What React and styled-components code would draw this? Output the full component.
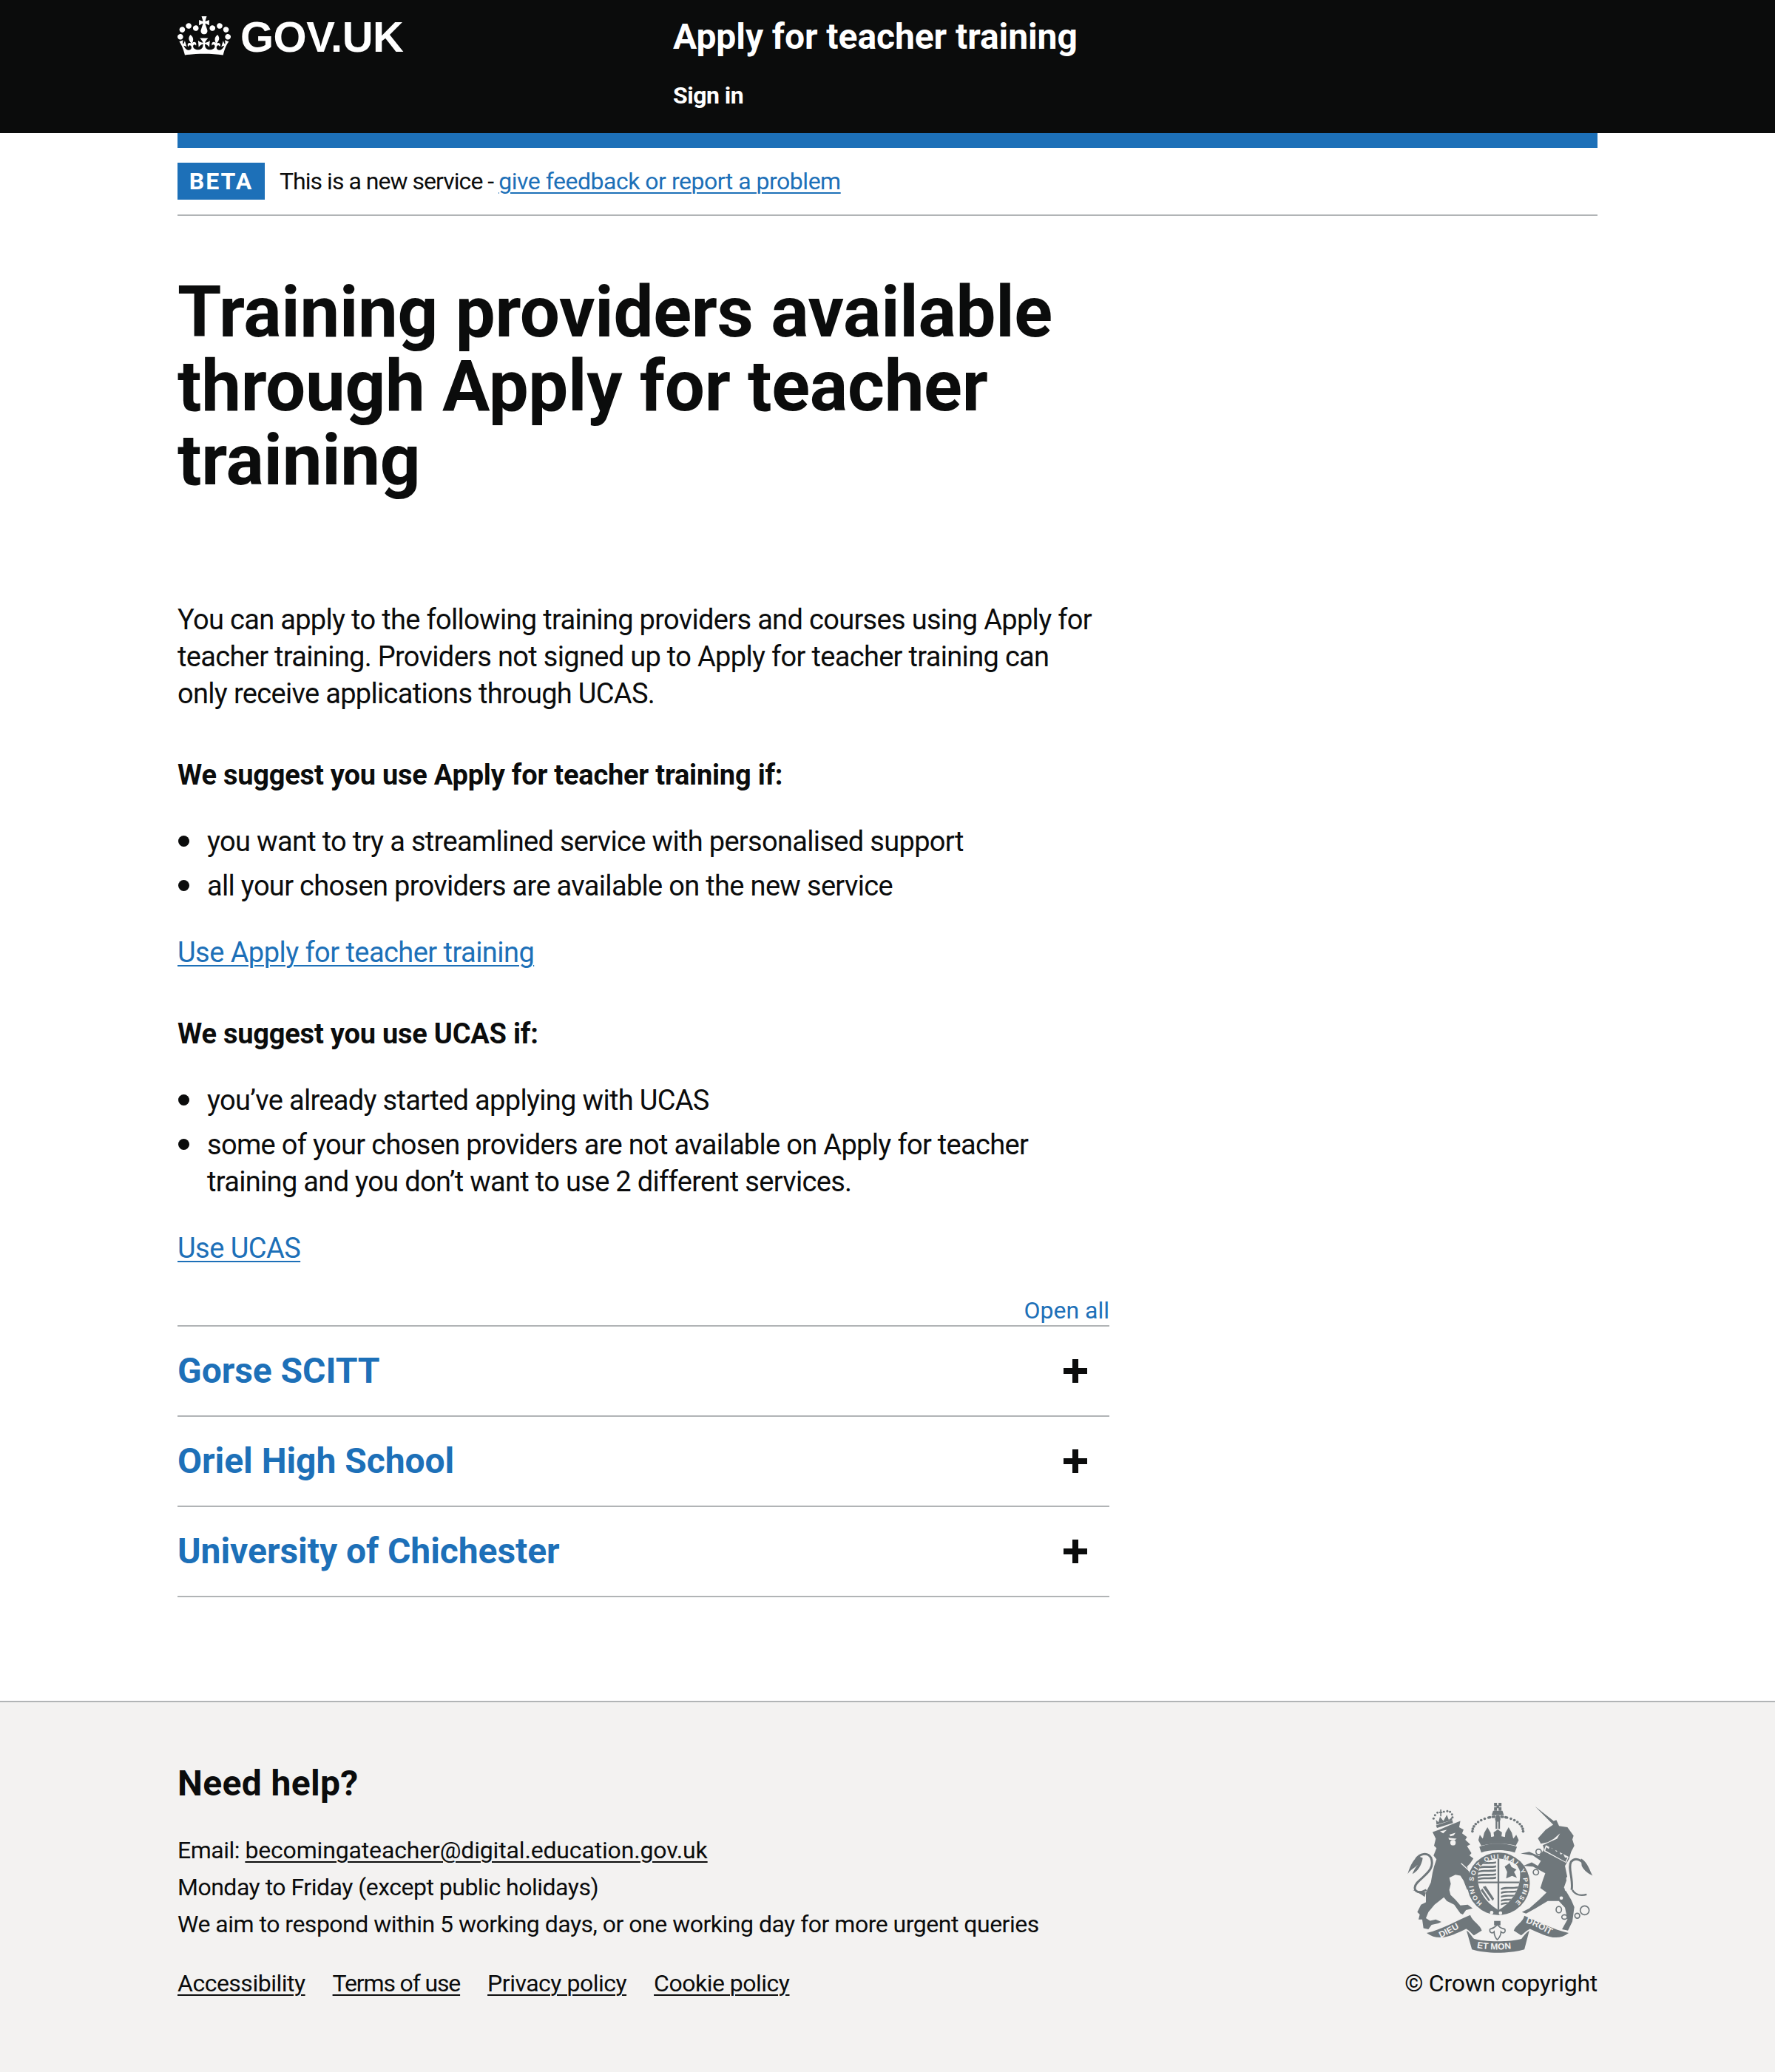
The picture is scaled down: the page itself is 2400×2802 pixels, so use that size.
import React from "react";
import styled, { createGlobalStyle } from "styled-components";

const BASE = `Roboto, "Noto Sans", Arial, sans-serif`;
const BLACK = "#0b0c0c";
const BLUE = "#1d70b8";
const GREY = "#b1b4b6";
const CREST = "#6f777b";
const FOOT = "#f3f2f1";

const Global = createGlobalStyle`
  html, body { margin: 0; padding: 0; background: #fff; }
  body { font-family: ${BASE}; color: ${BLACK}; }
  * { box-sizing: border-box; }
`;

const Wrap = styled.div`
  width: 1920px;
  margin: 0 auto;
`;
const Header = styled.header`
  background: ${BLACK};
  height: 180px;
`;
const HeaderInner = styled(Wrap)`
  display: flex;
  padding-top: 20px;
`;
const LogoBox = styled.a`
  width: 670px;
  display: flex;
  align-items: flex-start;
  gap: 13px;
  color: #fff;
`;
const Crown = styled.svg`
  width: 72px;
  height: 53px;
  margin-top: 2px;
  fill: currentColor;
`;
const LogoText = styled.span`
  font: 700 58px/58px "Liberation Sans", Arial, sans-serif;
  letter-spacing: -0.5px;
  margin-top: 1px;
`;
const HeaderContent = styled.div`
  display: flex;
  flex-direction: column;
  gap: 29px;
`;
const ServiceName = styled.a`
  color: #fff;
  font-size: 48px;
  font-weight: 700;
  line-height: 60px;
  letter-spacing: -0.07px;
`;
const HeaderNav = styled.a`
  color: #fff;
  font-size: 32px;
  font-weight: 700;
  line-height: 40px;
  letter-spacing: -0.5px;
`;
const BlueBar = styled(Wrap)`
  height: 20px;
  background: ${BLUE};
`;
const Phase = styled(Wrap)`
  display: flex;
  align-items: center;
  gap: 20px;
  padding: 20px 0;
  height: 92px;
  border-bottom: 2px solid ${GREY};
`;
const Tag = styled.strong`
  background: ${BLUE};
  color: #fff;
  width: 118px;
  height: 50px;
  display: flex;
  align-items: center;
  justify-content: center;
  font-size: 32px;
  font-weight: 700;
  letter-spacing: 2px;
`;
const PhaseText = styled.span`
  font-size: 32px;
  line-height: 40px;
  letter-spacing: -0.97px;
`;
const Link = styled.a`
  color: ${BLUE};
  text-decoration: underline;
  text-decoration-thickness: 2px;
  text-underline-offset: 4px;
`;
const PhaseLink = styled(Link)`
  letter-spacing: -0.49px;
`;
const Main = styled(Wrap)`
  padding-top: 80px;
`;
const H1 = styled.h1`
  margin: 0 0 141px;
  font-size: 96px;
  line-height: 100px;
  font-weight: 700;
  letter-spacing: -0.3px;
  max-width: 1260px;
`;
const Column = styled.div`
  width: 1260px;
`;
const P = styled.p`
  margin: 0;
  max-width: 1240px;
  font-size: 38px;
  line-height: 50px;
  letter-spacing: -0.68px;
`;
const H2 = styled.h2`
  margin: 60px 0 40px;
  font-size: 38px;
  line-height: 50px;
  font-weight: 700;
  letter-spacing: -0.22px;
`;
const List = styled.ul`
  margin: 0;
  padding: 0 0 0 40px;
  list-style: none;
`;
const Item = styled.li`
  position: relative;
  font-size: 38px;
  line-height: 50px;
  letter-spacing: -0.68px;
  margin-bottom: 10px;
  &:last-child { margin-bottom: 0; }
  &::before {
    content: "";
    position: absolute;
    left: -39px;
    top: 17px;
    width: 15px;
    height: 15px;
    border-radius: 50%;
    background: ${BLACK};
  }
`;
const BigLink = styled(Link)`
  display: block;
  margin-top: 40px;
  font-size: 38px;
  line-height: 50px;
  letter-spacing: -0.55px;
`;
const Controls = styled.div`
  margin-top: 39px;
  text-align: right;
  font-size: 32px;
  line-height: 40px;
`;
const OpenAll = styled.span`
  color: ${BLUE};
`;
const Accordion = styled.div`
  border-bottom: 2px solid ${GREY};
`;
const Section = styled.div`
  display: flex;
  justify-content: space-between;
  align-items: center;
  height: 122px;
  padding-right: 30px;
  border-top: 2px solid ${GREY};
`;
const SectionTitle = styled.span`
  color: ${BLUE};
  font-size: 48px;
  font-weight: 700;
  line-height: 60px;
  letter-spacing: -0.05px;
`;
const Plus = styled.svg`
  width: 32px;
  height: 32px;
  fill: ${BLACK};
`;
const Footer = styled.footer`
  margin-top: 140px;
  background: ${FOOT};
  border-top: 2px solid ${GREY};
  padding: 80px 0 100px;
  height: 502px;
`;
const FooterInner = styled(Wrap)`
  display: flex;
  justify-content: space-between;
  align-items: flex-end;
`;
const FooterLeft = styled.div`
  display: flex;
  flex-direction: column;
`;
const Need = styled.h2`
  margin: 0 0 35px;
  font-size: 48px;
  line-height: 60px;
  font-weight: 700;
  letter-spacing: 0.35px;
`;
const FooterLine = styled.div`
  font-size: 32px;
  line-height: 50px;
  letter-spacing: -0.5px;
`;
const FootLink = styled.a`
  color: ${BLACK};
  text-decoration: underline;
  text-decoration-thickness: 2px;
  text-underline-offset: 4px;
  letter-spacing: ${p => p.$spacing || "-0.5px"};
`;
const Links = styled.div`
  display: flex;
  gap: 37px;
  margin-top: 35px;
  font-size: 32px;
  line-height: 40px;
`;
const FooterRight = styled.div`
  display: flex;
  flex-direction: column;
  align-items: center;
  gap: 19px;
`;
const Crest = styled.svg`
  width: 253px;
  height: 207px;
`;
const Copyright = styled.div`
  font-size: 32px;
  line-height: 40px;
  letter-spacing: -0.25px;
`;
const CrestText = styled.text`
  font-family: "Liberation Sans", Arial, sans-serif;
  font-weight: 700;
  fill: ${FOOT};
`;

const CROWN = "M25 30.2c3.5 1.5 7.7-.2 9.1-3.7 1.5-3.6-.2-7.8-3.9-9.2-3.6-1.4-7.6.3-9.1 3.9-1.4 3.5.3 7.5 3.9 9zM9 39.5c3.6 1.5 7.8-.2 9.2-3.7 1.5-3.6-.2-7.8-3.9-9.1-3.6-1.5-7.6.2-9.1 3.8-1.4 3.5.3 7.5 3.8 9zM4.4 57.2c3.5 1.5 7.7-.2 9.1-3.8 1.5-3.6-.2-7.7-3.9-9.1-3.5-1.5-7.6.3-9.1 3.8-1.4 3.5.3 7.6 3.9 9.1zm38.3-21.4c3.5 1.5 7.7-.2 9.1-3.8 1.5-3.6-.2-7.7-3.9-9.1-3.6-1.5-7.6.3-9.1 3.8-1.3 3.6.4 7.7 3.9 9.1zm64.4-5.6c-3.6 1.5-7.8-.2-9.1-3.7-1.5-3.6.2-7.8 3.8-9.2 3.6-1.4 7.7.3 9.2 3.9 1.3 3.5-.4 7.5-3.9 9zm15.9 9.3c-3.6 1.5-7.7-.2-9.1-3.7-1.5-3.6.2-7.8 3.7-9.1 3.6-1.5 7.7.2 9.2 3.8 1.5 3.5-.3 7.5-3.8 9zm4.7 17.7c-3.6 1.5-7.8-.2-9.2-3.8-1.5-3.6.2-7.7 3.9-9.1 3.6-1.5 7.7.3 9.2 3.8 1.3 3.5-.4 7.6-3.9 9.1zM89.3 35.8c-3.6 1.5-7.8-.2-9.2-3.8-1.4-3.6.2-7.7 3.9-9.1 3.6-1.5 7.7.3 9.2 3.8 1.4 3.6-.3 7.7-3.9 9.1zM69.7 17.7l8.9 4.7V9.3l-8.9 2.8c-.2-.3-.5-.6-.9-.9L72.4 0H59.6l3.5 11.2c-.3.3-.6.5-.9.9l-8.8-2.8v13.1l8.8-4.7c.3.3.6.7.9.9l-5 15.4v.1c-.2.8-.4 1.6-.4 2.4 0 4.1 3.1 7.5 7 8.1h.2c.3 0 .7.1 1 .1.4 0 .7 0 1-.1h.2c4-.6 7.1-4.1 7.1-8.1 0-.8-.1-1.7-.4-2.4V34l-5.1-15.4c.4-.2.7-.6 1-.9zM66 92.8c16.9 0 32.8 1.1 47.1 3.2 4-16.9 8.9-26.7 14-33.5l-9.6-3.4c1 4.9 1.1 7.2 0 10.2-1.5-1.4-3-4.3-4.2-8.7L108.6 76c2.8-2 5-3.2 7.5-3.3-4.4 9.4-10 11.9-13.6 11.2-4.3-.8-6.3-4.6-5.6-7.9 1-4.7 5.7-5.9 8-.5 4.3-8.7-3-11.4-7.6-8.8 7.1-7.2 7.9-13.5 2.1-21.1-8 6.1-8.1 12.3-4.5 20.8-4.7-5.4-12.1-2.5-9.5 6.2 3.4-5.2 7.9-2 7.2 3.1-.6 4.3-6.4 7.8-13.5 7.2-10.3-.9-10.9-8-11.2-13.8 2.5-.5 7.1 1.8 11 7.3L80.2 60c-4.1 4.4-8 5.3-12.3 5.4 1.4-4.4 8-11.6 8-11.6H55.5s6.4 7.2 7.9 11.6c-4.2-.1-8-1-12.3-5.4l1.4 16.4c3.9-5.5 8.5-7.7 10.9-7.3-.3 5.8-.9 12.8-11.1 13.8-7.2.6-12.9-2.9-13.5-7.2-.7-5 3.8-8.3 7.1-3.1 2.7-8.7-4.6-11.6-9.4-6.2 3.7-8.5 3.6-14.7-4.6-20.8-5.8 7.6-5 13.9 2.2 21.1-4.7-2.6-11.9.1-7.7 8.8 2.3-5.5 7.1-4.2 8.1.5.7 3.3-1.3 7.1-5.7 7.9-3.5.7-9-1.8-13.5-11.2 2.5.1 4.7 1.3 7.5 3.3l-4.7-15.4c-1.2 4.4-2.7 7.2-4.3 8.7-1.1-3-.9-5.3 0-10.2l-9.5 3.4c5 6.9 9.9 16.7 14 33.5 14.8-2.1 30.8-3.2 47.7-3.2z";

const arc = (cx, cy, rx, ry, a0, a1, n) =>
  Array.from({ length: n }, (_, i) => {
    const a = ((a0 + ((a1 - a0) * i) / (n - 1)) * Math.PI) / 180;
    return [cx + rx * Math.cos(a), cy + ry * Math.sin(a)];
  });

const SHIELD = "M418 395 C423 365 455 345 500 342 C545 345 582 365 587 395 C592 450 570 510 500 552 C430 510 408 450 418 395 Z";

const Arms = () => (
  <Crest viewBox="130 110 760 622" aria-label="Royal coat of arms">
    <defs>
      <clipPath id="shieldClip"><path d={SHIELD} /></clipPath>
      <path id="garter" d="M434.4 523.1 A102 102 0 1 1 565.6 523.1" />
      <path id="ribL" d="M265 665 C300 650 335 625 372 610" />
      <path id="ribR" d="M610 603 C650 615 695 645 742 668" />
      <path id="ribC" d="M412 705 C460 715 530 715 585 703" />
    </defs>
    <g fill={CREST}>
      {/* lion */}
      <path d="M232 235 L262 224 L300 208 L345 190 L340 215 L358 225 L352 240 L372 255 L365 266 L385 285 L372 292 L390 320 L382 330 L398 342 L385 362 L372 375 L385 410 L405 440 L395 472 L372 468 L358 432 L345 412 L325 408 L300 420 L306 445 L300 470 L305 490 L325 510 L345 533 L375 530 L395 545 L368 552 L355 570 L345 565 L320 530 L290 515 L278 500 L240 530 L215 560 L205 585 L222 595 L245 590 L268 600 L255 606 L228 612 L215 630 L195 625 L190 590 L175 590 L180 570 L170 560 L185 530 L205 520 L205 480 L225 440 L232 400 L238 375 L248 345 L236 330 L248 300 L238 290 L245 262 Z" />
      <path d="M262 232 L290 226 L275 240 Z" fill={FOOT} />
      <path d="M300 245 L325 238 L318 248 L305 252 Z" fill={FOOT} />
      <circle cx="315" cy="278" r="11" fill={FOOT} />
      <path d="M296 258 L330 262 L322 268 L300 266 Z" fill={FOOT} />
      <path d="M348 362 L392 402" stroke={FOOT} strokeWidth="4" fill="none" />
      <path d="M207 470 C170 490 145 470 170 440 C205 405 242 385 226 340 C212 315 180 322 165 345" fill="none" stroke={CREST} strokeWidth="9" />
      <path d="M172 332 C150 350 138 380 131 405 C145 385 158 382 172 368 C160 380 155 395 150 405 C172 395 188 370 192 340 Z" />
      <path d="M150 470 C170 478 185 488 200 498 L205 480 Z" />
      {/* lion crown */}
      <path d="M246 208 L312 186 L315 198 L250 218 Z" />
      <path d="M248 205 L246 185 L256 195 L262 172 L276 190 L290 165 L298 185 L310 175 L312 186 Z" />
      {[[236,180],[242,166],[252,156],[278,152],[292,150],[303,153],[311,163],[313,175]].map(([x,y],i)=><circle key={i} cx={x} cy={y} r="4.5" />)}
      <path d="M259 152 h4 v-9 h5 v9 h4 v5 h-4 v14 h-5 v-14 h-4 z" />
      {/* central crown */}
      <path d="M418 268 L430 290 C460 280 535 280 570 290 L582 268 C540 250 455 250 418 268 Z" />
      <path d="M418 268 L424 246 L436 262 L442 238 L455 215 L468 238 L470 255 L482 252 L480 236 L497 224 L514 236 L512 252 L526 255 L528 238 L541 215 L554 238 L560 262 L572 246 L582 268 Z" />
      {arc(497, 232, 103, 60, 180, 288, 12).map(([x, y], i) => <circle key={`a${i}`} cx={x} cy={y} r="5.5" />)}
      {arc(497, 232, 103, 60, 252, 360, 12).map(([x, y], i) => <circle key={`b${i}`} cx={x} cy={y} r="5.5" />)}
      <circle cx="497" cy="182" r="11" />
      <path d="M488 190 h7 v32 h-7z M499 190 h7 v32 h-7z" />
      <path d="M482 116 h12 l0 10 h6 l0-10 h12 v14 l-10 0 v4 l10 0 v14 h-12 l0-10 h-6 l0 10 h-12 v-14 l10 0 v-4 l-10 0z" />
      <path d="M478 148 h38 l6 18 h-50z" />
      <path d="M422 295 C460 278 535 278 575 295 L566 318 C530 305 465 305 430 318 Z" />
      {/* garter and shield */}
      <circle cx="500" cy="445" r="127" />
      <path d={SHIELD} fill={FOOT} />
      <g clipPath="url(#shieldClip)">
        {[362, 378, 394, 410, 424].map(y => <path key={y} d={`M412 ${y} C435 ${y-10} 465 ${y-2} 490 ${y-8} v8 C465 ${y+6} 435 ${y-2} 412 ${y+8}z`} />)}
        <path d="M525 375 l20-14 l8 16 l20 10 l-10 10 l12 24 l-20-8 l-24 10 l4-26z" />
        <path d="M436 458 l40 56 l6-8 l-34-52z M428 472 l32 44 l6-4 l-32-48z" />
        {[462, 478, 494, 510, 524].map(y => <path key={y} d={`M510 ${y} C530 ${y-8} 550 ${y} 590 ${y-8} v8 C550 ${y+6} 530 ${y} 510 ${y+8}z`} />)}
        <path d="M496 340 h7 v215 h-7z M405 436 h190 v7 h-190z" />
      </g>
      <circle cx="472" cy="562" r="7" fill={FOOT} />
      <circle cx="508" cy="564" r="7" fill={FOOT} />
      {/* unicorn */}
      <path d="M648 130 L724 190 L735 186 L746 210 L780 215 L805 250 L800 265 L808 290 L795 315 L786 345 L770 372 L780 420 L766 460 L795 510 L808 540 L800 598 L782 635 L758 630 L780 590 L770 542 L745 515 L700 515 L650 545 L612 566 L595 560 L625 545 L665 510 L695 480 L670 462 L680 430 L690 402 L640 375 L600 372 L635 358 L660 372 L672 352 L640 330 L590 322 L625 315 L665 332 L685 305 L680 288 L738 262 L750 240 L725 262 L700 276 L672 282 L660 260 L692 225 L722 205 Z" />
      <path d="M684 312 L692 288 L785 335 L775 360 Z" fill={FOOT} />
      <path d="M690 310 L694 296 L704 304 L708 290 L718 304 L726 298 L734 314 L746 310 L752 326 L762 322 L770 338 L780 338 L772 356 Z" />
      <circle cx="785" cy="425" r="10" fill={FOOT} />
      <circle cx="777" cy="467" r="8" fill={FOOT} />
      <circle cx="755" cy="503" r="7" fill={FOOT} />
      <path d="M797 470 C805 425 780 380 795 355 C812 335 838 348 855 372" fill="none" stroke={CREST} strokeWidth="9" />
      <path d="M800 470 C812 490 835 495 858 488" fill="none" stroke={CREST} strokeWidth="7" />
      <path d="M835 342 C862 355 872 395 882 412 C865 402 850 395 838 372 Z" />
      <g fill="none" stroke={CREST} strokeWidth="5">
        <circle cx="663" cy="315" r="11" />
        <circle cx="652" cy="398" r="11" />
        <ellipse cx="745" cy="550" rx="11" ry="13" />
        <ellipse cx="768" cy="580" rx="11" ry="9" />
        <circle cx="820" cy="575" r="10" />
        <circle cx="850" cy="553" r="18" />
      </g>
      {/* motto ribbons */}
      <path d="M208 645 C270 630 330 595 385 572 C395 600 425 610 432 635 L400 655 C385 640 375 630 368 628 C320 650 260 685 208 645 Z" />
      <path d="M785 645 C725 632 660 598 605 575 C600 600 570 612 562 635 L592 655 C608 640 620 632 628 628 C680 650 735 685 785 645 Z" />
      <path d="M370 635 C385 645 393 662 400 668 C440 682 555 682 594 668 C600 660 610 645 625 635 L605 712 C540 730 450 730 392 712 Z" />
      <path d="M482 596 h26 v18 h-26z" />
      <path d="M495 610 C480 630 470 625 465 630 C462 645 475 648 482 640 C482 655 490 668 495 672 C500 668 510 655 510 640 C518 648 530 645 526 630 C520 625 510 630 495 610 Z" fill={FOOT} stroke={CREST} strokeWidth="5" />
    </g>
    <CrestText fontSize="36"><textPath href="#ribL">DIEU</textPath></CrestText>
    <CrestText fontSize="36"><textPath href="#ribR">DROIT</textPath></CrestText>
    <CrestText fontSize="36"><textPath href="#ribC">ET MON</textPath></CrestText>
    <CrestText fontSize="26"><textPath href="#garter" textLength="495">HONI SOIT QUI MAL Y PENSE</textPath></CrestText>
  </Crest>
);

const PlusIcon = () => (
  <Plus viewBox="0 0 32 32"><path d="M12 0h8v12h12v8H20v12h-8V20H0v-8h12z" /></Plus>
);

export default function App() {
  return (
    <>
      <Global />
      <Header>
        <HeaderInner>
          <LogoBox>
            <Crown viewBox="0 0 132 97"><path fillRule="evenodd" d={CROWN} /></Crown>
            <LogoText>GOV.UK</LogoText>
          </LogoBox>
          <HeaderContent>
            <ServiceName>Apply for teacher training</ServiceName>
            <HeaderNav>Sign in</HeaderNav>
          </HeaderContent>
        </HeaderInner>
      </Header>
      <BlueBar />
      <Phase>
        <Tag>BETA</Tag>
        <PhaseText>This is a new service - <PhaseLink>give feedback or report a problem</PhaseLink></PhaseText>
      </Phase>
      <Main>
        <H1>Training providers available through Apply for teacher training</H1>
        <Column>
          <P>You can apply to the following training providers and courses using Apply for teacher training. Providers not signed up to Apply for teacher training can only receive applications through UCAS.</P>
          <H2>We suggest you use Apply for teacher training if:</H2>
          <List>
            <Item>you want to try a streamlined service with personalised support</Item>
            <Item>all your chosen providers are available on the new service</Item>
          </List>
          <BigLink>Use Apply for teacher training</BigLink>
          <H2>We suggest you use UCAS if:</H2>
          <List>
            <Item>you’ve already started applying with UCAS</Item>
            <Item>some of your chosen providers are not available on Apply for teacher training and you don’t want to use 2 different services.</Item>
          </List>
          <BigLink>Use UCAS</BigLink>
          <Controls><OpenAll>Open all</OpenAll></Controls>
          <Accordion>
            {["Gorse SCITT", "Oriel High School", "University of Chichester"].map(name => (
              <Section key={name}>
                <SectionTitle>{name}</SectionTitle>
                <PlusIcon />
              </Section>
            ))}
          </Accordion>
        </Column>
      </Main>
      <Footer>
        <FooterInner>
          <FooterLeft>
            <Need>Need help?</Need>
            <FooterLine>Email: <FootLink $spacing="-0.16px">becomingateacher@digital.education.gov.uk</FootLink></FooterLine>
            <FooterLine>Monday to Friday (except public holidays)</FooterLine>
            <FooterLine>We aim to respond within 5 working days, or one working day for more urgent queries</FooterLine>
            <Links>
              <FootLink>Accessibility</FootLink>
              <FootLink $spacing="-1.15px">Terms of use</FootLink>
              <FootLink>Privacy policy</FootLink>
              <FootLink>Cookie policy</FootLink>
            </Links>
          </FooterLeft>
          <FooterRight>
            <Arms />
            <Copyright>© Crown copyright</Copyright>
          </FooterRight>
        </FooterInner>
      </Footer>
    </>
  );
}
